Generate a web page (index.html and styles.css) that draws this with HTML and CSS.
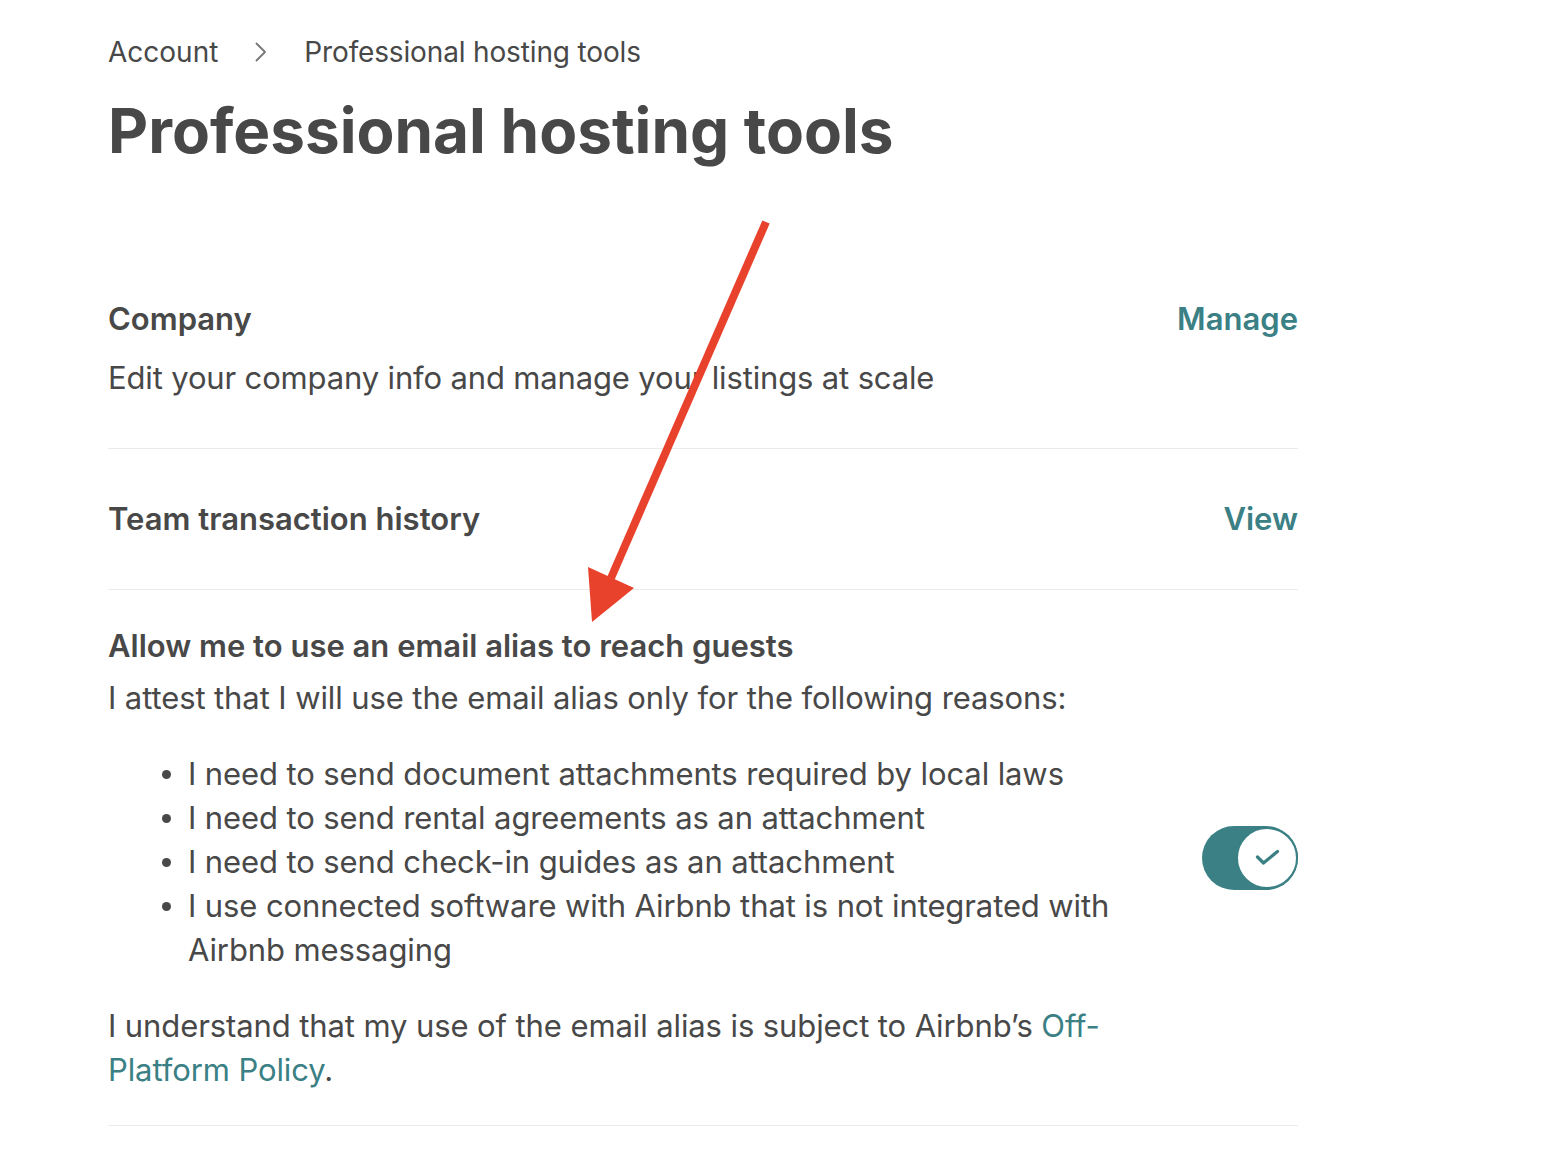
FILE: index.html
```html
<!DOCTYPE html>
<html lang="en">
<head>
<meta charset="utf-8">
<title>Professional hosting tools</title>
<link rel="stylesheet" href="styles.css">
</head>
<body>
<main class="page">
  <nav class="crumbs">
    <span class="crumb">Account</span>
    <svg class="chev" width="12" height="20" viewBox="0 0 12 20" aria-hidden="true"><polyline points="1.5,1.5 10,10 1.5,18.5" fill="none" stroke="#767676" stroke-width="1.8" stroke-linecap="round" stroke-linejoin="round"/></svg>
    <span class="crumb">Professional hosting tools</span>
  </nav>
  <h1 class="title">Professional hosting tools</h1>

  <section class="row row-first">
    <div class="row-text">
      <h2 class="row-head">Company</h2>
      <p class="row-desc">Edit your company info and manage your listings at scale</p>
    </div>
    <a class="action" href="#">Manage</a>
  </section>

  <section class="row">
    <div class="row-text">
      <h2 class="row-head">Team transaction history</h2>
    </div>
    <a class="action" href="#">View</a>
  </section>

  <section class="row row-alias">
    <div class="alias-text">
      <h2 class="row-head">Allow me to use an email alias to reach guests</h2>
      <p class="body attest">I attest that I will use the email alias only for the following reasons:</p>
      <ul class="reasons">
        <li>I need to send document attachments required by local laws</li>
        <li>I need to send rental agreements as an attachment</li>
        <li>I need to send check-in guides as an attachment</li>
        <li>I use connected software with Airbnb that is not integrated with Airbnb messaging</li>
      </ul>
      <p class="body understand">I understand that my use of the email alias is subject to Airbnb’s <a class="link" href="#">Off-</a><br><a class="link" href="#">Platform Policy</a>.</p>
    </div>
    <div class="toggle" role="switch" aria-checked="true">
      <svg class="knob" width="62" height="62" viewBox="0 0 62 62" aria-hidden="true">
        <circle cx="31" cy="31" r="30" fill="#ffffff" stroke="#3a8084" stroke-width="2"/>
        <polyline points="21.5,30 27.5,36 41.5,24.5" fill="none" stroke="#3a8084" stroke-width="3.2" stroke-linecap="round" stroke-linejoin="round"/>
      </svg>
    </div>
  </section>
</main>

<svg class="arrow" width="1542" height="1154" viewBox="0 0 1542 1154" aria-hidden="true">
  <line x1="766" y1="222" x2="611" y2="578" stroke="#e8412c" stroke-width="8"/>
  <polygon points="588,567 634,588 592,622" fill="#e8412c"/>
</svg>
</body>
</html>
```
FILE: styles.css
```css
* { box-sizing: border-box; }

body {
  margin: 0;
  background: #ffffff;
  color: #484848;
  font-family: "Inter", "Liberation Sans", sans-serif;
}

.page {
  width: 1190px;
  margin-left: 108px;
  padding-top: 32px;
}

.crumbs {
  display: flex;
  align-items: center;
  gap: 37px;
  height: 40px;
  font-size: 28px;
  line-height: 40px;
  color: #484848;
}

.crumb:last-child {
  letter-spacing: -0.15px;
}

.chev { display: block; }

.title {
  margin: 21px 0 80px;
  font-size: 62px;
  line-height: 76px;
  font-weight: 700;
  color: #484848;
}

.row {
  display: flex;
  align-items: flex-start;
  justify-content: space-between;
  padding: 48px 0;
  border-bottom: 1px solid #ebebeb;
}

.row-head {
  margin: 0;
  font-size: 31px;
  line-height: 44px;
  font-weight: 600;
  letter-spacing: 0;
}

.row-desc,
.body,
.reasons {
  font-size: 31px;
  line-height: 44px;
  letter-spacing: -0.1px;
  font-weight: 400;
}

.row-desc {
  margin: 15px 0 0;
  letter-spacing: -0.15px;
}

.action {
  font-size: 31px;
  line-height: 44px;
  font-weight: 600;
  color: #3a8084;
  text-decoration: none;
}

.row-alias {
  align-items: center;
  padding: 34px 0 33px;
}

.alias-text {
  width: 1030px;
}

.attest {
  margin: 8px 0 0;
}

.reasons {
  margin: 32px 0 0;
  padding: 0 0 0 80px;
  list-style: none;
}

.reasons li::before {
  content: "";
  display: inline-block;
  width: 9px;
  height: 9px;
  border-radius: 50%;
  background: #484848;
  margin-left: -26px;
  margin-right: 17px;
  vertical-align: 6.5px;
}

.understand {
  margin: 32px 0 0;
}

.link {
  color: #3a8084;
  text-decoration: none;
}

.toggle {
  flex: none;
  display: flex;
  justify-content: flex-end;
  align-items: center;
  width: 96px;
  height: 64px;
  padding: 1px 0;
  border-radius: 32px;
  background: #3a8084;
}

.knob { display: block; }

.arrow {
  position: absolute;
  left: 0;
  top: 0;
  pointer-events: none;
}
```
